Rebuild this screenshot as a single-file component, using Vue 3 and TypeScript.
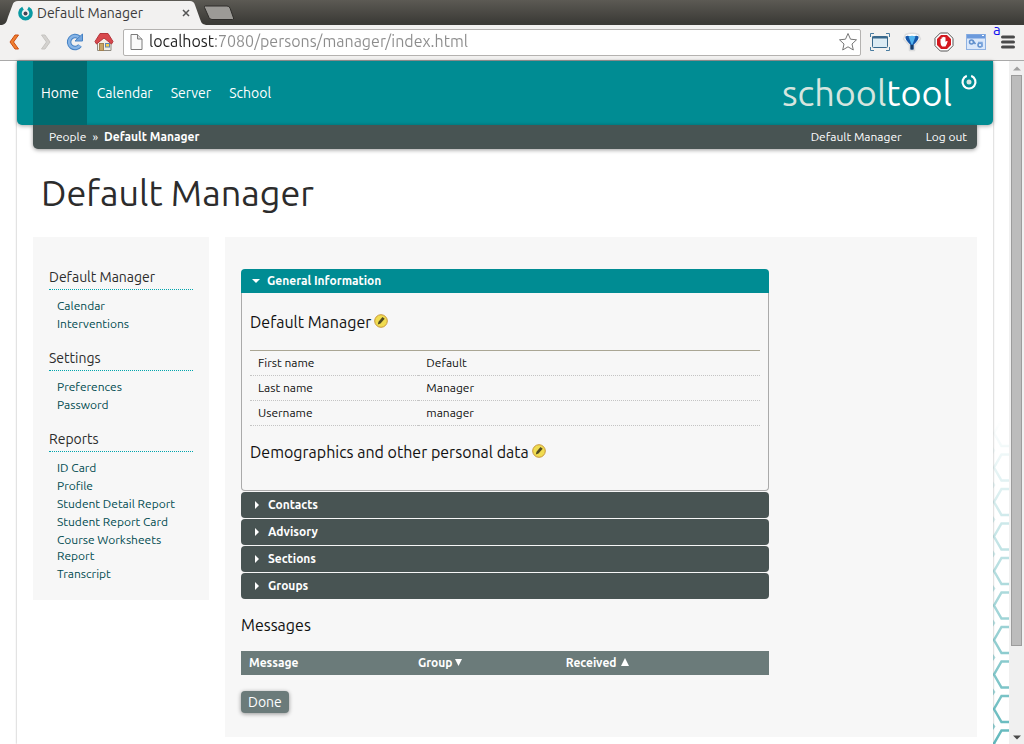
<script setup lang="ts">
import { ref } from 'vue'

interface SideGroup { title: string; links: string[] }

const url = ref('localhost:7080/persons/manager/index.html')

const nav: string[] = ['Home', 'Calendar', 'Server', 'School']

const sideGroups: SideGroup[] = [
  { title: 'Default Manager', links: ['Calendar', 'Interventions'] },
  { title: 'Settings', links: ['Preferences', 'Password'] },
  {
    title: 'Reports',
    links: ['ID Card', 'Profile', 'Student Detail Report', 'Student Report Card', 'Course Worksheets Report', 'Transcript'],
  },
]

const details: [string, string][] = [
  ['First name', 'Default'],
  ['Last name', 'Manager'],
  ['Username', 'manager'],
]

const closed: string[] = ['Contacts', 'Advisory', 'Sections', 'Groups']
const open = ref(true)

const hexRows: number[] = Array.from({ length: 10 }, (_, i) => i)
</script>

<template>
  <div class="window">
    <div class="tabstrip">
      <div class="tab">
        <svg class="edge" width="16" height="25" viewBox="0 0 16 25"><path d="M0 25C4 24 4.500 22 6 17L10.500 5C11.500 2 13 1 16 1V25Z" fill="#f2f1f0" /></svg>
        <div class="tab-body">
          <svg width="15" height="15" viewBox="0 0 15 15">
            <path d="M5 2.300A5.500 5.500 0 1 0 10 2.300" fill="none" stroke="#0a9aa3" stroke-width="3.500" />
            <circle cx="7.500" cy="7.500" r="2" fill="#445" />
          </svg>
          <span class="tab-title">Default Manager</span>
          <button class="plain" aria-label="Close tab">
            <svg width="8" height="8" viewBox="0 0 8 8"><path d="M1 1L7 7M7 1L1 7" stroke="#555" stroke-width="1.500" /></svg>
          </button>
        </div>
        <svg class="edge" width="16" height="25" viewBox="0 0 16 25"><path d="M0 1C2.500 1 4 2 5 5L10 19C11.500 23 12 24 16 25H0Z" fill="#f2f1f0" /></svg>
      </div>
      <button class="plain newtab" aria-label="New tab">
        <svg width="32" height="16" viewBox="0 0 32 16"><path d="M2.500 1H24Q26 1 27 3L30.500 13Q31 14.500 29.500 14.500H9Q7 14.500 6 12.500L1.500 2.500Q1 1 2.500 1Z" fill="#9c9a96" stroke="#2e2d2a" /></svg>
      </button>
    </div>

    <div class="toolbar">
      <button class="plain" aria-label="Back">
        <svg width="16" height="20" viewBox="0 0 16 20"><path d="M9 3H12.500L7.500 10L12.500 17H9L4 10Z" fill="#f08030" stroke="#cc4c12" stroke-linejoin="round" /></svg>
      </button>
      <button class="plain forward" aria-label="Forward">
        <svg width="16" height="20" viewBox="0 0 16 20"><path d="M7 3H3.500L8.500 10L3.500 17H7L12 10Z" fill="#d4d2cf" stroke="#c6c4c1" stroke-linejoin="round" /></svg>
      </button>
      <button class="plain reload" aria-label="Reload">
        <svg width="18" height="20" viewBox="0 0 18 20">
          <path d="M13 5.500A6 6 0 1 0 14 13.500" fill="none" stroke="#4682c4" stroke-width="4.500" />
          <path d="M13 5.500A6 6 0 1 0 14 13.500" fill="none" stroke="#86b4e6" stroke-width="2.500" />
          <path d="M16.500 2V9H9Z" fill="#74a6de" stroke="#4682c4" stroke-linejoin="round" />
        </svg>
      </button>
      <button class="plain home-button" aria-label="Home page">
        <svg width="20" height="20" viewBox="0 0 20 20">
          <path d="M3.500 9V18.500H17V9L10 3.500Z" fill="#f3efe6" stroke="#8f8a80" />
          <rect x="5.500" y="11.500" width="4" height="7" fill="#c9a562" stroke="#a08050" />
          <rect x="11.500" y="11.500" width="4" height="3.500" fill="#f8d04c" stroke="#5e86b4" />
          <path d="M6 1.500H14L19 9.500L17.500 12L10 6L2.500 12L1 9.500Z" fill="#d8484c" stroke="#b4363c" stroke-linejoin="round" />
        </svg>
      </button>
      <div class="address">
        <svg width="13" height="18" viewBox="0 0 13 18"><path d="M1 1.500H7.500L12 6V16.500H1Z" fill="#fafafa" stroke="#7c7c7c" /><path d="M7.500 1.500V6H12" fill="#ddd" stroke="#7c7c7c" /></svg>
        <input v-model="url" class="url" type="text" aria-label="Address" />
        <button class="plain" aria-label="Bookmark this page">
          <svg width="20" height="20" viewBox="0 0 20 20"><path d="M10 1.500L12.500 7.200L18.500 7.800L14 12L15.300 18L10 14.800L4.700 18L6 12L1.500 7.800L7.500 7.200Z" fill="#fff" stroke="#777" stroke-linejoin="round" /></svg>
        </button>
      </div>
      <button class="plain" aria-label="Window resizer">
        <svg width="20" height="18" viewBox="0 0 20 18">
          <rect x="2.500" y="3.500" width="15" height="11" rx="1" fill="#dcebf4" stroke="#38688c" /><path d="M2 4.500H18" stroke="#38688c" stroke-width="2" />
          <path d="M.5 4V.5H4M16 .5H19.500V4M.5 14V17.500H4M16 17.500H19.500V14" fill="none" stroke="#4a7ca0" />
        </svg>
      </button>
      <button class="plain" aria-label="Marker">
        <svg width="20" height="20" viewBox="0 0 20 20">
          <path d="M3.500 2.500Q10 0 16.500 2.500L18.500 7L12.500 13.500V18.500H7.500V13.500L1.500 7Z" fill="#fff" stroke="#dcdcdc" stroke-width="1.500" stroke-linejoin="round" />
          <path d="M3.500 4.500Q6 2.500 10 5.500Q14 2.500 16.500 4.500Q17.500 7 11.500 13V17.500H8.500V13Q2.500 7 3.500 4.500Z" fill="#1556a8" />
          <path d="M6.500 4.500Q10 3 13.500 4.500L10.500 12.500H9.500Z" fill="#52b4ee" />
          <path d="M8.500 13H11.500V17.500H8.500Z" fill="#163c66" />
        </svg>
      </button>
      <button class="plain" aria-label="Ad blocker">
        <svg width="20" height="20" viewBox="0 0 20 20">
          <path d="M6.300 1H13.700L19 6.300V13.700L13.700 19H6.300L1 13.700V6.300Z" fill="#fff" stroke="#555" />
          <path d="M7 3H13L17 7V13L13 17H7L3 13V7Z" fill="#d3181e" />
          <path d="M6.500 7Q7 6.300 7.600 7V5.500Q8.300 4.900 8.900 5.500Q9.500 4.200 10.200 5.200Q11 4.600 11.500 5.600V9.700Q12.800 8.500 13.700 9.200Q13 12 11.500 14.500H8.200Q6.500 12.800 6.500 10.500Z" fill="#fff" />
        </svg>
      </button>
      <button class="plain" aria-label="Translator">
        <svg width="20" height="18" viewBox="0 0 20 18">
          <rect x=".5" y="1.500" width="19" height="15" fill="#dbe8fa" stroke="#8fb2e2" /><path d="M1 3.500H19" stroke="#6c9adc" stroke-width="4" />
          <path d="M16 2.500H18" stroke="#fff" />
          <circle cx="5.500" cy="9" r="2" fill="none" stroke="#5f8fcc" stroke-width="1.500" /><path d="M7 8L9.500 11" stroke="#5f8fcc" stroke-width="1.500" />
          <circle cx="14" cy="12" r="2" fill="none" stroke="#5f8fcc" stroke-width="1.500" /><path d="M12 9.500H16V14" fill="none" stroke="#7fa8de" stroke-width="1.500" />
        </svg>
      </button>
      <button class="plain menu" aria-label="Menu">
        <svg width="14" height="14" viewBox="0 0 14 14"><path d="M1.500 2H12.500M1.500 7H12.500M1.500 12H12.500" stroke="#4a4a4a" stroke-width="3" stroke-linecap="round" /></svg>
        <span class="menu-letter">a</span>
      </button>
    </div>

    <div class="viewport">
      <div class="page">
        <header class="banner">
          <nav class="nav">
            <a v-for="(item, i) in nav" :key="item" href="#" :class="{ active: i === 0 }">{{ item }}</a>
          </nav>
          <a class="logo" href="#">
            <span class="logo-text"><span class="logo-first">school</span>tool</span>
            <svg width="18" height="18" viewBox="0 0 18 18">
              <path d="M6.800 2.900A6.500 6.500 0 1 0 11.200 2.900" fill="none" stroke="#fff" stroke-width="2.200" />
              <circle cx="9" cy="9" r="2.500" fill="#d5e5df" />
            </svg>
          </a>
        </header>
        <div class="crumbs">
          <div class="trail"><a href="#">People</a><span>»</span><strong>Default Manager</strong></div>
          <div class="account"><a href="#">Default Manager</a><a href="#">Log out</a></div>
        </div>
        <h1>Default Manager</h1>
        <div class="columns">
          <aside class="sidebar">
            <section v-for="group in sideGroups" :key="group.title">
              <h2>{{ group.title }}</h2>
              <ul>
                <li v-for="link in group.links" :key="link"><a href="#">{{ link }}</a></li>
              </ul>
            </section>
          </aside>
          <main class="main">
            <div class="content">
              <button class="fold open" :aria-expanded="open" @click="open = !open">
                <svg width="8" height="8" viewBox="0 0 8 8"><path d="M0 2H8L4 6Z" fill="#fff" /></svg>General Information
              </button>
              <div v-show="open" class="panel">
                <h3>
                  Default Manager
                  <a href="#" aria-label="Edit Default Manager">
                    <svg width="14" height="14" viewBox="0 0 14 14"><circle cx="7" cy="7" r="6.300" fill="#f0dc50" stroke="#c9973a" /><path d="M3.800 10.500L4.500 7.800L8.500 3L10.700 4.800L6.500 9.500Z" fill="#504a20" /></svg>
                  </a>
                </h3>
                <table class="details">
                  <tbody>
                    <tr v-for="row in details" :key="row[0]">
                      <th scope="row">{{ row[0] }}</th>
                      <td>{{ row[1] }}</td>
                    </tr>
                  </tbody>
                </table>
                <h3>
                  Demographics and other personal data
                  <a href="#" aria-label="Edit demographics">
                    <svg width="14" height="14" viewBox="0 0 14 14"><circle cx="7" cy="7" r="6.300" fill="#f0dc50" stroke="#c9973a" /><path d="M3.800 10.500L4.500 7.800L8.500 3L10.700 4.800L6.500 9.500Z" fill="#504a20" /></svg>
                  </a>
                </h3>
              </div>
              <button v-for="name in closed" :key="name" class="fold" aria-expanded="false">
                <svg width="8" height="8" viewBox="0 0 8 8"><path d="M2 0L6 4L2 8Z" fill="#fff" /></svg>{{ name }}
              </button>
              <h3 class="messages-title">Messages</h3>
              <table class="messages">
                <thead>
                  <tr>
                    <th scope="col">Message</th>
                    <th scope="col"><span class="sort">Group<svg width="7" height="8" viewBox="0 0 7 8"><path d="M0 1H7L3.500 8Z" fill="#fff" /></svg></span></th>
                    <th scope="col"><span class="sort wide">Received<svg width="8" height="8" viewBox="0 0 8 8"><path d="M0 8H8L4 0Z" fill="#fff" /></svg></span></th>
                  </tr>
                </thead>
              </table>
              <button class="done">Done</button>
            </div>
          </main>
        </div>
      </div>
      <div class="gutter">
        <svg width="16" height="324" viewBox="0 0 16 324">
          <defs>
            <linearGradient id="fade" x1="0" y1="0" x2="0" y2="1">
              <stop offset="0" stop-color="#fff" stop-opacity="0" />
              <stop offset="1" stop-color="#fff" stop-opacity=".62" />
            </linearGradient>
            <mask id="fadeMask" maskUnits="userSpaceOnUse" x="0" y="0" width="16" height="324"><rect width="16" height="324" fill="url(#fade)" /></mask>
          </defs>
          <g mask="url(#fadeMask)">
            <g v-for="row in hexRows" :key="row" :transform="`translate(0 ${row * 34.5})`">
              <path d="M17 0H8.500L1 13L8.500 26H17" fill="none" stroke="#008c93" stroke-width="2.500" />
              <path d="M0 27L2.500 30.500L0 34Z" fill="#008c93" opacity=".7" />
            </g>
          </g>
        </svg>
      </div>
      <div class="scrollbar" aria-hidden="true">
        <svg width="8" height="5" viewBox="0 0 8 5"><path d="M0 4.500L4 .5L8 4.500Z" fill="#a0a0a0" /></svg>
        <div class="track"><div class="thumb"></div></div>
        <svg width="8" height="5" viewBox="0 0 8 5"><path d="M0 .5L4 4.500L8 .5Z" fill="#4a4a4a" /></svg>
      </div>
    </div>
  </div>
</template>

<style>
body { margin: 0; overflow: hidden; background: #fff; }
</style>

<style scoped>
* { box-sizing: border-box; }
.window {
  display: flex;
  flex-direction: column;
  height: 100vh;
  overflow: hidden;
  font-family: Ubuntu, "Noto Sans", sans-serif;
  font-size: 12px;
  color: #111;
}
svg { display: block; flex: none; }
a { color: inherit; text-decoration: none; }
button { font-family: inherit; cursor: pointer; }
.plain { border: 0; padding: 0; background: none; flex: none; }
h1, h2, h3, ul { margin: 0; padding: 0; font-weight: 400; list-style: none; }

.tabstrip {
  display: flex;
  height: 25px;
  flex: none;
  background: linear-gradient(#5c5a54, #3c3b37 90%);
}
.tab { display: flex; padding-left: 2px; }
.tab-body { display: flex; align-items: center; width: 172px; background: #f2f1f0; margin-top: 1px; }
.tab-title { flex: 1; margin-left: 4px; font-size: 14px; color: #3c3c3c; }
.newtab { align-self: center; margin-left: -3px; }

.toolbar {
  display: flex;
  align-items: center;
  gap: 12px;
  height: 36px;
  flex: none;
  padding: 0 9px 1px 6px;
  background: #f2f1f0;
  border-bottom: 1px solid #a9a9a9;
}
.forward { margin-left: 4px; }
.home-button { margin: 0 -3px 0 -2px; }
.address {
  display: flex;
  align-items: center;
  flex: 1;
  min-width: 0;
  height: 27px;
  margin-right: -3px;
  padding: 0 2px 0 6px;
  background: #fff;
  border: 1px solid #b4b2b0;
  border-radius: 2px;
}
.url {
  flex: 1;
  min-width: 0;
  border: 0;
  padding: 0 0 2px;
  margin-left: 6px;
  outline: 0;
  font-family: inherit;
  font-size: 16px;
  color: transparent;
  background: linear-gradient(to right, #222 66px, #8c8c8c 66px);
  background-clip: text;
}
.menu { position: relative; margin-left: 3px; }
.menu-letter { position: absolute; left: -8px; top: -13px; font-size: 15px; line-height: 16px; color: #11e; }

.viewport { display: flex; flex: 1; min-height: 0; }
.page {
  flex: 1;
  min-width: 0;
  margin-left: 17px;
  box-shadow: 0 0 2px rgba(0, 0, 0, .35);
}
.banner {
  display: flex;
  justify-content: space-between;
  height: 64px;
  padding: 0 15px 0 16px;
  background: #008c93;
  border-radius: 0 0 5px 5px;
  box-shadow: 0 1px 4px rgba(0, 0, 0, .35);
  color: #fff;
}
.nav { display: flex; gap: 2px; font-size: 14px; }
.nav a { display: flex; align-items: center; padding: 0 8px; }
.nav .active { background: #006b70; }
.logo { display: flex; gap: 8px; padding-top: 12px; }
.logo-text { font-size: 36px; line-height: 40px; }
.logo-first { color: #d5e5df; }
.crumbs {
  display: flex;
  justify-content: space-between;
  align-items: center;
  height: 24px;
  margin: 0 16px;
  padding: 0 10px 2px 16px;
  background: #485453;
  border-radius: 0 0 5px 5px;
  box-shadow: 0 1px 4px rgba(0, 0, 0, .4);
  color: #fff;
}
.trail { display: flex; gap: 6px; }
.account { display: flex; gap: 24px; }
h1 { padding: 16px 24px; font-size: 36px; line-height: 56px; color: #2c2c2c; }
.columns { display: flex; align-items: flex-start; gap: 16px; margin: 0 16px; }
.sidebar { flex: none; width: 176px; padding: 28px 16px 4px; background: #f7f7f7; }
.sidebar h2 { font-size: 14px; line-height: 24px; border-bottom: 1px dotted #00a5ad; color: #2c2c2c; }
.sidebar ul { padding: 7px 8px 13px; color: #004b50; }
.sidebar li { padding: 1px 0; line-height: 16px; }
.main { flex: 1; padding: 32px 208px 24px 16px; background: #f7f7f7; }
.fold {
  display: flex;
  align-items: center;
  gap: 7px;
  width: 100%;
  height: 26px;
  margin-top: 1px;
  padding: 0 12px 2px;
  border: 0;
  border-radius: 4px;
  background: #485453;
  font-size: 12px;
  font-weight: 700;
  color: #fff;
}
.fold svg { margin-top: 2px; }
.fold.open { height: 24px; margin: 0; padding: 0 11px 2px; border-radius: 4px 4px 0 0; background: #008c93; }
.panel { padding: 17px 8px 26px; border: 1px solid #aaa; border-top: 0; border-radius: 0 0 4px 4px; }
h3 { display: flex; align-items: center; gap: 3px; font-size: 16px; line-height: 24px; }
h3 a { padding-bottom: 2px; }
table { width: 100%; border-collapse: collapse; table-layout: fixed; }
.details { margin: 16px 0 14px; border-top: 1px solid #aaa694; }
.details th, .details td { height: 25px; padding: 0 8px 2px; border-bottom: 1px dotted #c4c4c4; text-align: left; font-weight: 400; }
.details th { width: 33%; }
.messages-title { margin: 14px 0; }
.messages th { height: 24px; padding: 0 8px 2px; background: #6b7b7a; color: #fff; text-align: left; }
.messages th:nth-child(1) { width: 32%; }
.messages th:nth-child(2) { width: 28%; }
.sort { display: flex; align-items: center; gap: 2px; }
.sort.wide { gap: 5px; }
.done {
  display: block;
  height: 22px;
  margin-top: 16px;
  padding: 0 7px;
  border: 0;
  border-radius: 4px;
  background: #6b7b7a;
  box-shadow: 0 1px 4px rgba(0, 0, 0, .4);
  font-size: 14px;
  color: #fff;
}
.gutter { display: flex; flex: none; align-items: flex-end; width: 16px; overflow: hidden; }
.scrollbar {
  display: flex;
  flex-direction: column;
  align-items: center;
  flex: none;
  width: 15px;
  padding: 5px 0 4px;
  background: #f0f0f0;
}
.track { flex: 1; width: 11px; margin: 4px 0; }
.thumb { height: 87%; background: #bcbcbc; border: 1px solid #9c9c9c; }
</style>
